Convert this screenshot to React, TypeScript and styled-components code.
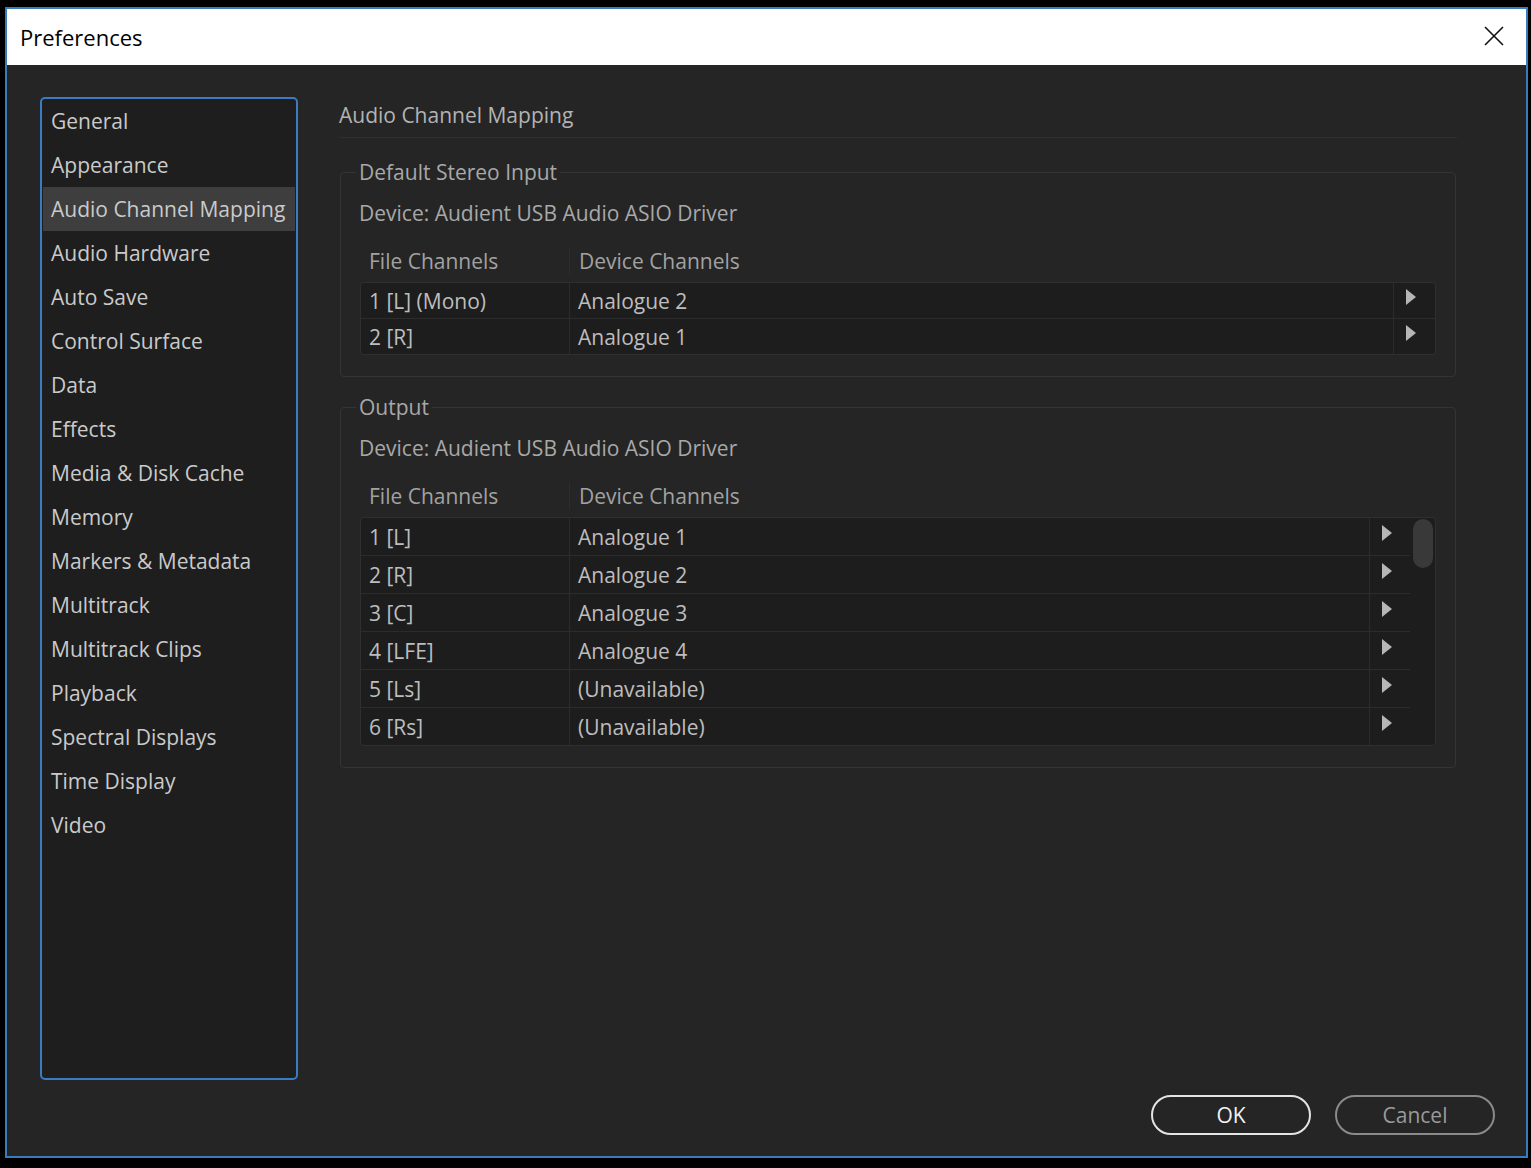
import React from "react";
import styled, { createGlobalStyle } from "styled-components";

const GlobalStyle = createGlobalStyle`
  html, body { margin: 0; padding: 0; background: #000; }
  body { font-family: "Open Sans", "Noto Sans", sans-serif; }
  * { box-sizing: border-box; }
`;

const Page = styled.div`
  padding: 7px 0 0 5px;
  height: 1168px;
  background: #000;
`;

const Window = styled.div`
  width: 1523px;
  height: 1151px;
  border: 2px solid #3a7bbd;
  background: #252525;
  display: flex;
  flex-direction: column;
`;

const TitleBar = styled.div`
  height: 56px;
  flex: none;
  background: #ffffff;
  display: flex;
  align-items: center;
  justify-content: space-between;
  padding: 0 22px 0 13px;
`;

const Title = styled.div`
  font-family: "Open Sans", "Noto Sans", sans-serif;
  font-size: 22px;
  color: #000;
  line-height: 28px;
`;

const CloseButton = styled.button`
  width: 20px;
  height: 20px;
  padding: 0;
  border: 0;
  background: transparent;
  display: flex;
  margin-top: -2px;
`;

const Body = styled.div`
  flex: 1;
  display: flex;
  flex-direction: column;
`;

const TopRow = styled.div`
  display: flex;
  gap: 41px;
  padding: 32px 69px 0 33px;
`;

const Sidebar = styled.ul`
  list-style: none;
  margin: 0;
  padding: 0;
  width: 258px;
  height: 983px;
  flex: none;
  border: 2px solid #3b7cc0;
  border-radius: 5px;
  background: #1e1e1e;
`;

const NavItem = styled.li<{ $active?: boolean }>`
  height: 44px;
  display: flex;
  align-items: center;
  padding-left: ${(p) => (p.$active ? "8px" : "9px")};
  margin: ${(p) => (p.$active ? "0 1px" : "0")};
  background: ${(p) => (p.$active ? "#3e3e3e" : "transparent")};
  color: #cacaca;
  font-size: 21px;
  white-space: nowrap;
`;

const Main = styled.div`
  flex: 1;
  display: flex;
  flex-direction: column;
`;

const Heading = styled.div`
  font-size: 21px;
  line-height: 28px;
  color: #b3b3b3;
  padding: 4px 0 8px;
  border-bottom: 1px solid #2f2f2f;
`;

const Group = styled.fieldset<{ $top: number }>`
  margin: ${(p) => p.$top}px 1px 0;
  border: 1px solid #343434;
  border-radius: 4px;
  padding: 0 19px 21px 19px;
  min-width: 0;
`;

const Legend = styled.legend`
  font-size: 21px;
  line-height: 28px;
  color: #a8a8a8;
  padding: 0 3px;
  margin-left: -4px;
`;

const Device = styled.div`
  margin-top: 13px;
  margin-left: -1px;
  font-size: 21px;
  line-height: 28px;
  color: #a8a8a8;
`;

const HeaderRow = styled.div`
  margin-top: 20px;
  height: 28px;
  display: grid;
  grid-template-columns: 210px 1fr;
`;

const HeaderCell = styled.div<{ $divider?: boolean }>`
  display: flex;
  align-items: center;
  padding-left: 9px;
  font-size: 21px;
  color: #a2a2a2;
  border-right: ${(p) => (p.$divider ? "1px solid #2c2c2c" : "0")};
`;

const TableBox = styled.div`
  margin-top: 7px;
  border: 1px solid #2f2f2f;
  border-radius: 4px;
  background: #1d1d1d;
  display: flex;
`;

const Rows = styled.div`
  flex: 1;
  display: flex;
  flex-direction: column;
`;

const Row = styled.div<{ $h: number; $arrowW: number }>`
  height: ${(p) => p.$h}px;
  box-sizing: content-box;
  display: grid;
  grid-template-columns: 209px 1fr ${(p) => p.$arrowW}px;
  & + & {
    border-top: 1px solid #2c2c2c;
  }
`;

const Cell = styled.div`
  display: flex;
  align-items: center;
  padding-left: 8px;
  font-size: 21px;
  color: #bdbdbd;
  border-right: 1px solid #2c2c2c;
  white-space: nowrap;
`;

const ArrowCell = styled.div`
  display: flex;
  align-items: center;
  padding: 0 0 7px 12px;
`;

const ScrollTrack = styled.div`
  width: 25px;
  flex: none;
  padding: 1px 2px 0 3px;
`;

const ScrollThumb = styled.div`
  width: 20px;
  height: 49px;
  border-radius: 10px;
  background: #393939;
`;

const Footer = styled.div`
  display: flex;
  justify-content: flex-end;
  gap: 24px;
  padding: 15px 31px 21px 0;
`;

const DialogButton = styled.button<{ $primary?: boolean }>`
  width: 160px;
  height: 40px;
  border-radius: 20px;
  border: 2px solid ${(p) => (p.$primary ? "#e4e4e4" : "#8a8a8a")};
  background: transparent;
  color: ${(p) => (p.$primary ? "#f2f2f2" : "#9a9a9a")};
  font-family: "Open Sans", "Noto Sans", sans-serif;
  font-size: 21px;
  line-height: 1;
  padding: 0;
  display: flex;
  align-items: center;
  justify-content: center;
`;

const Arrow = () => (
  <svg width="10" height="16" viewBox="0 0 10 16">
    <polygon points="0,0 10,8 0,16" fill="#b6b6b6" />
  </svg>
);

const CloseIcon = () => (
  <svg width="20" height="20" viewBox="0 0 20 20">
    <path d="M1 1 L19 19 M19 1 L1 19" stroke="#111" strokeWidth="1.6" fill="none" />
  </svg>
);

type Mapping = [string, string];

const ChannelTable = ({
  rows,
  rowH,
  arrowW,
  scroll,
}: {
  rows: Mapping[];
  rowH: number;
  arrowW: number;
  scroll?: boolean;
}) => (
  <>
    <HeaderRow>
      <HeaderCell $divider>File Channels</HeaderCell>
      <HeaderCell>Device Channels</HeaderCell>
    </HeaderRow>
    <TableBox>
      <Rows>
        {rows.map(([f, d]) => (
          <Row key={f} $h={rowH} $arrowW={arrowW}>
            <Cell>{f}</Cell>
            <Cell>{d}</Cell>
            <ArrowCell>
              <Arrow />
            </ArrowCell>
          </Row>
        ))}
      </Rows>
      {scroll && (
        <ScrollTrack>
          <ScrollThumb />
        </ScrollTrack>
      )}
    </TableBox>
  </>
);

const navItems = [
  "General",
  "Appearance",
  "Audio Channel Mapping",
  "Audio Hardware",
  "Auto Save",
  "Control Surface",
  "Data",
  "Effects",
  "Media & Disk Cache",
  "Memory",
  "Markers & Metadata",
  "Multitrack",
  "Multitrack Clips",
  "Playback",
  "Spectral Displays",
  "Time Display",
  "Video",
];

const inputRows: Mapping[] = [
  ["1 [L] (Mono)", "Analogue 2"],
  ["2 [R]", "Analogue 1"],
];

const outputRows: Mapping[] = [
  ["1 [L]", "Analogue 1"],
  ["2 [R]", "Analogue 2"],
  ["3 [C]", "Analogue 3"],
  ["4 [LFE]", "Analogue 4"],
  ["5 [Ls]", "(Unavailable)"],
  ["6 [Rs]", "(Unavailable)"],
];

export default function App() {
  return (
    <Page>
      <GlobalStyle />
      <Window>
        <TitleBar>
          <Title>Preferences</Title>
          <CloseButton aria-label="Close">
            <CloseIcon />
          </CloseButton>
        </TitleBar>
        <Body>
          <TopRow>
            <Sidebar>
              {navItems.map((n) => (
                <NavItem key={n} $active={n === "Audio Channel Mapping"}>
                  {n}
                </NavItem>
              ))}
            </Sidebar>
            <Main>
              <Heading>Audio Channel Mapping</Heading>
              <Group $top={20}>
                <Legend>Default Stereo Input</Legend>
                <Device>Device: Audient USB Audio ASIO Driver</Device>
                <ChannelTable rows={inputRows} rowH={35} arrowW={41} />
              </Group>
              <Group $top={16}>
                <Legend>Output</Legend>
                <Device>Device: Audient USB Audio ASIO Driver</Device>
                <ChannelTable rows={outputRows} rowH={37} arrowW={40} scroll />
              </Group>
            </Main>
          </TopRow>
          <Footer>
            <DialogButton $primary>OK</DialogButton>
            <DialogButton>Cancel</DialogButton>
          </Footer>
        </Body>
      </Window>
    </Page>
  );
}
